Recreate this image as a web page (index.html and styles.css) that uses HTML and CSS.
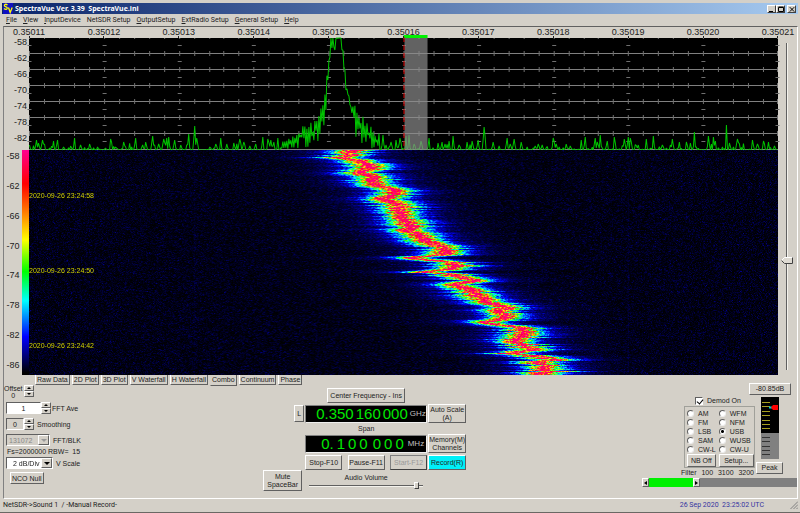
FILE: index.html
```html
<!DOCTYPE html>
<html lang="en">
<head>
<meta charset="utf-8">
<title>SpectraVue Ver. 3.39</title>
<link rel="stylesheet" href="styles.css">
</head>
<body>
<div class="window">
  <header class="titlebar">
    <svg class="logo" viewBox="0 0 10 11" aria-hidden="true"><rect width="10" height="11" fill="#1010c0"/><path d="M4.500 2 Q2.500 0.500 1.500 2 Q1 3.300 3 3.800 Q5 4.500 3.800 6 Q2.600 6.900 1 5.600" fill="none" stroke="#ff0" stroke-width="1.300"/><path d="M5.500 4.500 L7.200 9.500 L9.200 4.500" fill="none" stroke="#ff0" stroke-width="1.300"/></svg>
    <h1 class="title">SpectraVue Ver. 3.39&nbsp; SpectraVue.ini</h1>
    <div class="winbuttons">
      <button class="winbtn" aria-label="Minimize"><svg viewBox="0 0 8 7"><path d="M1 5.500H5" stroke="#000"/></svg></button>
      <button class="winbtn" aria-label="Maximize"><svg viewBox="0 0 8 7"><path d="M1.500 1.500H6.500V5.500H1.500ZM1.500 1H6.500" stroke="#000" fill="none"/></svg></button>
      <button class="winbtn close" aria-label="Close"><svg viewBox="0 0 8 7"><path d="M1.800 1.200L6.200 5.600M6.200 1.200L1.800 5.600" stroke="#000"/></svg></button>
    </div>
  </header>
  <nav class="menubar">
    <a href="#"><u>F</u>ile</a><a href="#"><u>V</u>iew</a><a href="#"><u>I</u>nputDevice</a><a href="#">NetSDR Setup</a><a href="#"><u>O</u>utputSetup</a><a href="#"><u>E</u>xtRadio Setup</a><a href="#"><u>G</u>eneral Setup</a><a href="#"><u>H</u>elp</a>
  </nav>
  <main class="client">
    <section class="plots">
      <div class="freqaxis">
        <span>0.35011</span><span>0.35012</span><span>0.35013</span><span>0.35014</span><span>0.35015</span><span>0.35016</span><span>0.35017</span><span>0.35018</span><span>0.35019</span><span>0.35020</span><span>0.35021</span>
      </div>
      <div class="dbaxis"><span>-58</span><span>-62</span><span>-66</span><span>-70</span><span>-74</span><span>-78</span><span>-82</span></div>
      <svg class="spectrum" id="spectrum" viewBox="0 0 748 112" preserveAspectRatio="none" role="img" aria-label="Spectrum">
        <rect width="748" height="112" fill="#000"/>
        <path id="grid" class="grid"/>
        <path id="ticks" class="ticks"/>
        <polyline id="trace" class="trace"/>
        <rect class="passband" x="375" y="0" width="23" height="112"/>
        <rect class="passmark" x="374" y="-3" width="24" height="3"/>
        <path class="carrier" d="M374.500 -1V112"/>
      </svg>
      <div class="levelscale">
        <div class="levels"><span>-58</span><span>-62</span><span>-66</span><span>-70</span><span>-74</span><span>-78</span><span>-82</span><span>-86</span></div>
        <div class="colorbar"></div>
      </div>
      <div class="waterfall">
        <canvas id="waterfall" width="748" height="225"></canvas>
        <div class="stamps"><time>2020-09-26 23:24:58</time><time>2020-09-26 23:24:50</time><time>2020-09-26 23:24:42</time></div>
      </div>
      <div class="gain"><input type="range" min="0" max="100" value="67" aria-label="Reference level"></div>
    </section>
    <section class="lower">
      <div class="tabs">
        <button>Raw Data</button><button>2D Plot</button><button>3D Plot</button><button>V Waterfall</button><button>H Waterfall</button><button class="active">Combo</button><button>Continuum</button><button>Phase</button>
      </div>
      <div class="fft">
        <div class="offset">
          <span class="offsettext">Offset<br>0</span>
          <span class="spin"><button aria-label="Offset up"></button><button class="down" aria-label="Offset down"></button></span>
        </div>
        <div class="field"><input class="box ave" id="ave" value="1"><span class="spin"><button aria-label="Average up"></button><button class="down" aria-label="Average down"></button></span><label for="ave">FFT Ave</label></div>
        <div class="field"><input class="box smooth" id="smooth" value="0"><span class="spin"><button aria-label="Smoothing up"></button><button class="down" aria-label="Smoothing down"></button></span><label class="wide" for="smooth">Smoothing</label></div>
        <div class="field"><span class="combo off"><select id="blk" disabled><option>131072</option></select></span><label class="wide" for="blk">FFT/BLK</label></div>
        <div class="rbw">Fs=2000000 RBW=&nbsp; 15</div>
        <div class="field"><span class="combo scale"><select id="vscale"><option>2 dB/Div</option></select></span><label class="wide" for="vscale">V Scale</label></div>
        <button class="btn nco">NCO Null</button>
      </div>
      <div class="tuning">
        <button class="btn center">Center Frequency - Ins</button>
        <button class="btn lock">L</button>
        <div class="lcd ghz"><b>0.350</b><b>160</b><b>000</b><i>GHz</i></div>
        <button class="btn auto">Auto Scale<br>(A)</button>
        <div class="spanlabel">Span</div>
        <div class="lcd mhz"><b>0.</b><b>1</b><b>0</b><b>0</b><b class="group">0</b><b>0</b><b>0</b><i>MHz</i></div>
        <button class="btn memory">Memory(M)<br>Channels</button>
        <div class="transport"><button class="btn">Stop-F10</button><button class="btn">Pause-F11</button><button class="btn start" disabled>Start-F12</button></div>
        <button class="btn record">Record(R)</button>
        <button class="btn mute">Mute<br>SpaceBar</button>
        <div class="volume"><label for="vol">Audio Volume</label><input id="vol" type="range" min="0" max="100" value="96"></div>
      </div>
      <div class="receiver">
        <button class="btn reading">-80.85dB</button>
        <div class="rx">
          <div class="demod">
            <label class="demodon"><input type="checkbox" checked><span>Demod On</span></label>
            <fieldset class="modes">
              <label><input type="radio" name="mode"><span>AM</span></label><label><input type="radio" name="mode"><span>WFM</span></label>
              <label><input type="radio" name="mode"><span>FM</span></label><label><input type="radio" name="mode"><span>NFM</span></label>
              <label><input type="radio" name="mode"><span>LSB</span></label><label><input type="radio" name="mode" checked><span>USB</span></label>
              <label><input type="radio" name="mode"><span>SAM</span></label><label><input type="radio" name="mode"><span>WUSB</span></label>
              <label><input type="radio" name="mode"><span>CW-L</span></label><label><input type="radio" name="mode"><span>CW-U</span></label>
              <button class="btn">NB Off</button><button class="btn">Setup...</button>
            </fieldset>
            <div class="filterrow"><span>Filter</span><span>100</span><span>3100</span><span>3200</span></div>
          </div>
          <div class="metercol">
            <svg class="meter" viewBox="0 0 18 62" role="img" aria-label="Signal meter">
              <rect width="18" height="62" fill="#808080"/><rect width="18" height="36" fill="#000"/>
              <path d="M1 5.500H9M1 9.500H9M1 14.500H9M1 18.500H9M1 23.500H9M1 27.500H9M1 31.500H9" stroke="#a8a020"/>
              <path d="M1 40.500H9M1 44.500H9M1 49.500H9M1 53.500H9M1 57.500H9" stroke="#333"/>
              <path d="M8 10.500H11" stroke="#00d0d0" stroke-width="2"/><path d="M10 10.500L12 8H17V13H12Z" fill="#f00"/>
            </svg>
            <button class="btn peak">Peak</button>
          </div>
        </div>
        <div class="passscroll"><button class="arrow" aria-label="Low cut"></button><span class="passfill"></span><button class="arrow right" aria-label="High cut"></button></div>
      </div>
    </section>
  </main>
  <footer class="status"><span>NetSDR-&gt;Sound 1&nbsp; / -Manual Record-</span><span class="clock">26 Sep 2020&nbsp; 23:25:02 UTC</span>
    <svg class="grip" viewBox="0 0 8 8" aria-hidden="true"><path d="M0.500 8L8 0.500M3.500 8L8 3.500M6.500 8L8 6.500" stroke="#808080"/></svg>
  </footer>
</div>
<script src="script.js"></script>
</body>
</html>
```
FILE: styles.css
```css
* { box-sizing: border-box; }

body {
  margin: 0;
  background: #d4d0c8;
  color: #222;
  font: 7px/9px "Liberation Sans", sans-serif;
}

button, input, select {
  margin: 0;
  padding: 0;
  color: inherit;
  font: inherit;
  border-radius: 0;
}

.window {
  display: flex;
  flex-direction: column;
  min-height: 100vh;
  padding: 3px 2px 1px;
  border-bottom: 1px solid #6a6864;
}

/* Title bar and menu */
.titlebar {
  display: flex;
  align-items: center;
  height: 11px;
  background: linear-gradient(to right, #0a246a, #a6caf0);
}
.logo { width: 10px; height: 11px; margin: 0 2px 0 1px; }
.title {
  flex: 1;
  margin: 0;
  color: #fff;
  font: bold 7px/11px "Noto Sans", sans-serif;
}
.winbuttons { display: flex; padding-right: 2px; }
.winbtn {
  width: 9px;
  height: 8px;
  background: #d4d0c8;
  border: 1px solid;
  border-color: #fff #404040 #404040 #fff;
}
.winbtn svg { display: block; width: 8px; height: 7px; }
.close { margin-left: 2px; }

.menubar {
  display: flex;
  gap: 6px;
  height: 12px;
  padding-left: 4px;
  font: 7px/12px Roboto, sans-serif;
}
.menubar a { color: #222; text-decoration: none; }

.client {
  flex: 1;
  margin-left: 1px;
  border: 1px solid #fff;
  border-top-color: #606060;
  border-left-color: #808080;
}

/* Spectrum and waterfall */
.plots {
  display: grid;
  grid-template-columns: 25px 1fr 19px;
  grid-template-rows: 11px 112px 225px;
}
.freqaxis {
  grid-column: 2;
  display: flex;
  justify-content: space-between;
  font-size: 9px;
  line-height: 10px;
}
.freqaxis span {
  position: relative;
  display: flex;
  justify-content: center;
  width: 0;
}
.freqaxis span::after {
  content: "";
  position: absolute;
  top: 9px;
  width: 1px;
  height: 2px;
  background: #222;
}
.dbaxis {
  grid-column: 1;
  grid-row: 2;
  display: flex;
  flex-direction: column;
  justify-content: space-between;
  padding: 0 2px 7px 0;
  text-align: right;
  font-size: 9px;
  line-height: 9px;
}
.spectrum { display: block; width: 100%; height: 112px; overflow: visible; }
.grid { fill: none; stroke: #808080; }
.ticks { fill: none; stroke: #707070; }
.trace { fill: none; stroke: #00c400; stroke-linejoin: bevel; }
.passband { fill: #8c8c8c; opacity: .7; }
.passmark { fill: #00f000; }
.carrier { stroke: #e00000; stroke-dasharray: 5 3; }

.levelscale { display: grid; grid-template-columns: 18px 7px; }
.levels {
  display: flex;
  flex-direction: column;
  justify-content: space-between;
  padding: 1px 0 5px;
  text-align: center;
  font-size: 9px;
  line-height: 10px;
}
.colorbar {
  background: linear-gradient(#ff0090, #ff0000 15%, #ff8000 28%, #ffff00 40%, #00ff00 54%, #00ffff 67%, #0000ff 83%, #000 99%);
}
.waterfall { position: relative; background: #000010; }
.waterfall canvas { display: block; width: 100%; height: 100%; }
.stamps {
  position: absolute;
  inset: 41px auto 24px 0;
  display: flex;
  flex-direction: column;
  justify-content: space-between;
  color: #d0d000;
  line-height: 10px;
}

.gain {
  grid-column: 3;
  grid-row: 1 / 4;
  padding: 16px 0 5px 3px;
}
input[type="range"] {
  appearance: none;
  background: none;
}
.gain input {
  display: block;
  writing-mode: vertical-lr;
  width: 12px;
  height: 100%;
}
.gain input::-webkit-slider-runnable-track {
  width: 12px;
  background: linear-gradient(to right, transparent 5px, #606060 5px 6px, #f4f2ec 6px 7px, transparent 7px);
}
.gain input::-webkit-slider-thumb {
  appearance: none;
  width: 12px;
  height: 7px;
  background: url("data:image/svg+xml,%3Csvg xmlns='http://www.w3.org/2000/svg' viewBox='0 0 12 7'%3E%3Cpath d='M.5 3.500L3.500.5H11.500V6.500H3.500Z' fill='%23dedad2' stroke='%23fff'/%3E%3Cpath d='M.5 3.500L3.500 6.500H11.500V.5' fill='none' stroke='%23404040'/%3E%3C/svg%3E") no-repeat;
  border: 0;
}

/* Control panel */
.lower {
  display: grid;
  grid-template-columns: 11fr 204px 14fr;
  grid-template-rows: 10px auto;
}
.btn, .tabs button, .spin button, .arrow {
  background: #d4d0c8;
  border: 1px solid;
  border-color: #fff #606060 #606060 #fff;
  white-space: nowrap;
}
.tabs {
  grid-column: 1 / 3;
  display: flex;
  gap: 2px;
  padding-left: 31px;
}
.tabs button {
  height: 10px;
  padding: 0 1px;
  line-height: 8px;
  border-top: 0;
}
.tabs .active { height: 11px; line-height: 10px; border-left-color: #d4d0c8; }

.fft {
  grid-column: 1;
  display: flex;
  flex-direction: column;
  align-items: flex-start;
  padding-left: 2px;
}
.offset { display: flex; height: 15px; margin-left: -2px; line-height: 7px; text-align: center; gap: 1px; }
.spin {
  display: flex;
  flex-direction: column;
  width: 10px;
}
.spin button {
  display: flex;
  align-items: center;
  justify-content: center;
  height: 6px;
}
.spin button::after {
  content: "";
  border: 2px solid transparent;
  border-top: 0;
  border-bottom: 2px solid #000;
}
.spin .down::after { border-top: 2px solid #000; border-bottom: 0; }
.field { display: flex; align-items: center; height: 16px; }
.field label { padding-left: 1px; }
.field .wide { padding-left: 3px; }
.box {
  height: 12px;
  text-align: center;
  background: #fff;
  border: 1px solid;
  border-color: #606060 #fff #fff #606060;
}
.ave { width: 35px; }
.smooth { width: 18px; background: #d4d0c8; }
.combo { position: relative; width: 44px; }
.combo select {
  appearance: none;
  display: block;
  width: 100%;
  height: 12px;
  padding-left: 2px;
  background: #fff;
  border: 1px solid;
  border-color: #606060 #fff #fff #606060;
  opacity: 1;
}
.combo::before {
  content: "";
  position: absolute;
  inset: 1px 1px 1px auto;
  width: 9px;
  background: #d4d0c8;
  border: 1px solid;
  border-color: #fff #606060 #606060 #fff;
}
.combo::after {
  content: "";
  position: absolute;
  top: 5px;
  right: 3px;
  border: 3px solid transparent;
  border-top-color: #000;
  border-bottom: 0;
}
.off select { color: #888; background: #d4d0c8; }
.off::after { border-top-color: #999; }
.scale { width: 47px; }
.scale select { padding-left: 6px; }
.rbw { height: 7px; line-height: 7px; padding-left: 1px; }
.nco { height: 12px; margin: 0 0 0 4px; padding: 0 1px; line-height: 9px; }
.field + .nco { margin-top: 1px; }

.tuning {
  grid-column: 2;
  display: grid;
  grid-template-columns: 30px 10px 122px 38px;
  grid-template-rows: 16px 19px 9px 19px 17px 19px;
  column-gap: 1px;
  row-gap: 1px;
  align-content: start;
  align-items: center;
  padding-top: 2px;
}
.center { grid-column: 3; justify-self: center; width: 78px; height: 15px; }
.lock { grid-column: 2; height: 17px; }
.lcd {
  grid-column: 3;
  display: flex;
  align-items: center;
  height: 18px;
  padding: 0 2px;
  color: #00e800;
  background: #000;
  border: 1px solid;
  border-color: #808080 #eee #eee #808080;
}
.lcd b { font-weight: normal; font-size: 15px; line-height: 16px; }
.lcd i { margin-left: auto; color: #c0c0c0; font-style: normal; font-size: 8px; }
.ghz { padding-left: 10px; gap: 2px; }
.mhz { padding-left: 15px; gap: 3px; }
.mhz .group { margin-left: 2px; }
.auto, .memory { height: 19px; line-height: 8px; }
.spanlabel { grid-column: 3; justify-self: center; }
.transport { grid-column: 3; display: flex; justify-content: space-between; }
.transport .btn { width: 37px; height: 15px; }
.transport .start { color: #999; border-color: #808080 #404040 #404040 #808080; }
.record { height: 15px; background: #00f0f8; }
.mute {
  grid-column: 1 / 3;
  grid-row: 5 / 7;
  align-self: end;
  height: 21px;
  width: 39px;
  line-height: 8px;
}
.volume {
  grid-column: 3;
  grid-row: 6;
  display: flex;
  flex-direction: column;
  align-items: center;
}
.volume input { width: 114px; height: 8px; }
.volume input::-webkit-slider-runnable-track {
  height: 2px;
  background: linear-gradient(#606060 50%, #f4f2ec 50%);
}
.volume input::-webkit-slider-thumb {
  appearance: none;
  width: 5px;
  height: 7px;
  margin-top: -3px;
  background: #d4d0c8;
  border: 1px solid;
  border-color: #fff #404040 #404040 #fff;
}

.receiver {
  grid-column: 3;
  grid-row: 1 / 3;
  display: flex;
  flex-direction: column;
  align-items: flex-end;
  padding-top: 8px;
}
.reading { width: 42px; height: 12px; margin-right: 6px; line-height: 8px; }
.rx { display: flex; gap: 2px; padding-right: 14px; }
.demod { width: 73px; padding-left: 3px; }
.demodon { display: flex; align-items: center; gap: 4px; height: 11px; padding-left: 11px; }
.demodon input {
  appearance: none;
  position: relative;
  width: 8px;
  height: 8px;
  background: #fff;
  border: 1px solid;
  border-color: #606060 #fff #fff #606060;
}
.demodon input:checked::after {
  content: "";
  position: absolute;
  top: 0;
  left: 2px;
  width: 3px;
  height: 5px;
  border: solid #000;
  border-width: 0 1px 1px 0;
  transform: rotate(40deg);
}
.modes {
  display: grid;
  grid-template-columns: 1fr 35px;
  column-gap: 3px;
  margin: 0;
  padding: 2px 0 0 2px;
  border: 1px solid #a0a09a;
}
.modes label { display: flex; align-items: center; gap: 4px; height: 9px; white-space: nowrap; }
.modes input {
  appearance: none;
  width: 7px;
  height: 7px;
  background: #fff;
  border: 1px solid;
  border-color: #606060 #eee #eee #606060;
  border-radius: 50%;
}
.modes input:checked { background: radial-gradient(#000 1px, #fff 2px); }
.modes .btn { height: 13px; line-height: 10px; }
.filterrow {
  display: flex;
  justify-content: space-between;
  margin-left: -3px;
}
.metercol { display: flex; flex-direction: column; align-items: center; padding-top: 2px; }
.meter { display: block; width: 18px; height: 62px; }
.peak { width: 27px; height: 12px; margin-top: 3px; line-height: 8px; }
.passscroll {
  display: flex;
  width: 155px;
  height: 9px;
  margin-top: 1px;
  background: #808080;
}
.passfill { width: 44px; background: #00f000; }
.arrow {
  display: flex;
  align-items: center;
  justify-content: center;
  width: 7px;
}
.arrow::after {
  content: "";
  border: 2px solid transparent;
  border-left: 0;
  border-right: 3px solid #000;
}
.arrow.right::after { border-left: 3px solid #000; border-right: 0; }

/* Status bar */
.status {
  display: flex;
  align-items: center;
  height: 12px;
  padding-left: 1px;
  font-family: Roboto, sans-serif;
}
.clock { margin-left: auto; margin-right: 26px; color: #3434a0; }
.grip { width: 8px; height: 8px; }
```
FILE: script.js
```js
// Deterministic noise source so that the display is stable between loads.
let seed = 20200926;
function rnd() {
  seed = (seed + 0x6d2b79f5) | 0;
  let t = Math.imul(seed ^ (seed >>> 15), 1 | seed);
  t = (t + Math.imul(t ^ (t >>> 7), 61 | t)) ^ t;
  return ((t ^ (t >>> 14)) >>> 0) / 4294967296;
}

const W = 748, H = 112;

// Graticule: 4 dB lines, with ticks at fifths of a division.
let grid = '', ticks = '';
for (let y = 16; y <= H; y += 16) grid += `M0 ${y - 0.5}H${W}`;
for (let i = 0; i <= 50; i++) {
  const x = Math.min(Math.round(i * 14.96) + 0.5, W - 0.5);
  for (let y = 16; y < H; y += 16) ticks += `M${x} ${y - 3}v5`;
  if (i % 5 === 0) for (let y = 8; y < H; y += 16) ticks += `M${x - 2} ${y - 0.5}h4`;
  ticks += `M${x} 0v1`;
}
document.getElementById('grid').setAttribute('d', grid);
document.getElementById('ticks').setAttribute('d', ticks);

// Spikes above the noise floor: [column, height].
const spikes = [[0,5],[7,10],[9,7],[13,10],[24,9],[28,10],[34,3],[41,4],[45,12],[51,5],[60,6],[68,3],
[81,11],[86,3],[94,8],[106,12],[113,5],[116,8],[123,14],[129,6],[134,11],[137,12],[139,13],[145,10],
[159,16],[165,24],[167,12],[180,3],[186,6],[191,12],[197,6],[204,7],[210,11],[214,8],[220,4],[226,6],
[233,13],[238,11],[241,10],[244,8],[248,12],[252,9],[255,8],[258,9],
[353,15],[356,5],[361,8],[366,10],[370,12],[376,14],[379,15],[384,6],[391,9],[399,12],[408,7],[412,8],[415,6],
[419,9],[423,14],[429,5],[437,8],[442,9],[448,10],[454,23],[463,8],[469,4],[477,12],[480,6],[484,11],[491,8],
[505,4],[508,6],[512,5],[523,12],[526,6],[536,6],[540,4],[551,10],[555,13],[565,12],[567,8],[570,15],[577,9],[584,13],
[594,11],[598,13],[600,12],[608,5],[616,11],[623,14],[632,5],[640,5],[642,11],[649,8],[656,8],[660,7],[664,18],[678,14],
[681,6],[683,13],[685,9],[696,25],[699,7],[707,11],[722,10],[727,6],[733,9],[738,8],[744,4]];
const trace = new Array(W).fill(0);
for (let x = 0; x < W; x++) if (rnd() < 0.3) trace[x] = rnd() * rnd() * 8;
for (const [x, h] of spikes) {
  trace[x] = h;
  if (x > 0) trace[x - 1] = 0.5 * h * rnd();
  if (x < W - 1) trace[x + 1] = 0.7 * h * rnd();
}
// Skirt and peak of the carrier: [column, height, ripple].
const shape = [[252,5,6],[262,9,9],[270,13,12],[280,15,13],[290,24,14],[295,45,17],[298,70,16],[301,105,14],
[303,114,3],[305,98,4],[306,113,3],[311,114,3],[314,88,12],[316,65,14],[320,46,16],[326,28,16],[334,19,14],[342,14,13],
[350,6,12]];
for (let i = 0; i < shape.length - 1; i++) {
  const [x0, h0, r0] = shape[i], [x1, h1, r1] = shape[i + 1];
  for (let x = x0; x < x1; x++) {
    const k = (x - x0) / (x1 - x0);
    const side = x % 2 ? 1 : -1;
    const h = h0 + (h1 - h0) * k + side * rnd() * (r0 + (r1 - r0) * k);
    trace[x] = Math.max(0, Math.min(112, h));
  }
}
document.getElementById('trace').setAttribute('points',
  trace.map((h, x) => `${x + 0.5},${(H - h).toFixed(1)}`).join(' '));

// Waterfall palette, weakest first: [level, r, g, b].
const palette = [[0,0,0,0],[0.17,0,0,255],[0.33,0,255,255],[0.46,0,255,0],[0.6,255,255,0],
[0.72,255,128,0],[0.85,255,0,30],[1,255,0,125]];
function colour(t) {
  t = Math.max(0, Math.min(1, t));
  let i = 1;
  while (i < palette.length - 1 && palette[i][0] < t) i++;
  const a = palette[i - 1], b = palette[i];
  const k = (t - a[0]) / (b[0] - a[0]);
  return [1, 2, 3].map(n => a[n] + (b[n] - a[n]) * k);
}

// Drift of the carrier, in thirds of a pixel: [row, column].
const drift = [[0,150],[5,145],[15,150],[22,118],[30,165],[36,190],[53,208],[65,180],[80,222],[105,215],
[115,275],[128,290],[138,265],[146,236],[160,280],[175,300],[195,298],[210,310],[225,326],[240,320],[250,345],
[265,370],[275,385],[290,420],[305,440],[313,425],[320,350],[325,320],[330,400],[337,460],[353,465],[359,420],
[364,360],[371,450],[380,485],[393,525],[397,490],[405,455],[413,500],[425,515],[440,540],[455,552],[470,615],
[482,595],[495,620],[507,600],[515,545],[520,570],[530,655],[545,670],[565,650],[575,640],[585,660],[595,700],
[603,645],[610,600],[615,680],[625,760],[635,690],[645,750],[655,730],[665,745],[675,715]];
const canvas = document.getElementById('waterfall');
const ctx = canvas.getContext('2d');
const img = ctx.createImageData(canvas.width, canvas.height);
let seg = 0;
for (let y = 0; y < canvas.height; y++) {
  while (seg < drift.length - 2 && drift[seg + 1][0] <= y * 3) seg++;
  const [y0, x0] = drift[seg], [y1, x1] = drift[seg + 1];
  const jitter = y > 192 ? 20 : 6;
  const c = 271 + (x0 + (x1 - x0) * (y * 3 - y0) / (y1 - y0)) / 3 + (rnd() - 0.5) * jitter;
  const left = 9 + rnd() * 8, right = 9 + rnd() * 8;
  for (let x = 0; x < canvas.width; x++) {
    const d = Math.abs(x - c), w = x < c ? left : right;
    const signal = 1.05 * Math.exp(-Math.pow(d / w, 1.25)) + 0.17 * Math.exp(-d / 26);
    let t = signal * (0.55 + rnd() * 0.8) + 0.06 * rnd() * rnd();
    if (rnd() < 0.07) t += 0.05 * rnd();
    if (x === 165 || x === 598 || x === 393) t += 0.025 * rnd();
    const p = (y * canvas.width + x) * 4;
    const [r, g, b] = colour(t);
    img.data[p] = r;
    img.data[p + 1] = g;
    img.data[p + 2] = b;
    img.data[p + 3] = 255;
  }
}
ctx.putImageData(img, 0, 0);
```
